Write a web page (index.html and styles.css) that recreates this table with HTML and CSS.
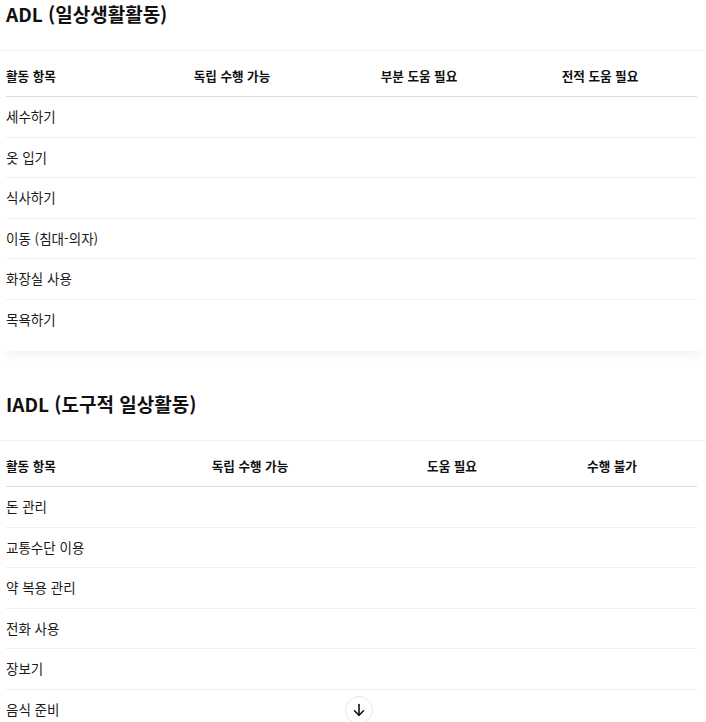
FILE: index.html
```html
<!DOCTYPE html>
<html lang="ko">
<head>
<meta charset="utf-8">
<title>ADL / IADL</title>
<link rel="stylesheet" href="styles.css">
</head>
<body>
<main class="page">
  <section class="card card-first">
    <h2 class="card-title">ADL (일상생활활동)</h2>
    <table class="grid">
      <colgroup>
        <col class="adl-c1"><col class="adl-c2"><col class="adl-c3"><col class="adl-c4">
      </colgroup>
      <thead>
        <tr><th class="left">활동 항목</th><th>독립 수행 가능</th><th>부분 도움 필요</th><th>전적 도움 필요</th></tr>
      </thead>
      <tbody>
        <tr><td class="left">세수하기</td><td></td><td></td><td></td></tr>
        <tr><td class="left">옷 입기</td><td></td><td></td><td></td></tr>
        <tr><td class="left">식사하기</td><td></td><td></td><td></td></tr>
        <tr><td class="left">이동 (침대-의자)</td><td></td><td></td><td></td></tr>
        <tr><td class="left">화장실 사용</td><td></td><td></td><td></td></tr>
        <tr><td class="left">목욕하기</td><td></td><td></td><td></td></tr>
      </tbody>
    </table>
  </section>

  <section class="card">
    <h2 class="card-title">IADL (도구적 일상활동)</h2>
    <table class="grid">
      <colgroup>
        <col class="iadl-c1"><col class="iadl-c2"><col class="iadl-c3"><col class="iadl-c4">
      </colgroup>
      <thead>
        <tr><th class="left">활동 항목</th><th>독립 수행 가능</th><th>도움 필요</th><th>수행 불가</th></tr>
      </thead>
      <tbody>
        <tr><td class="left">돈 관리</td><td></td><td></td><td></td></tr>
        <tr><td class="left">교통수단 이용</td><td></td><td></td><td></td></tr>
        <tr><td class="left">약 복용 관리</td><td></td><td></td><td></td></tr>
        <tr><td class="left">전화 사용</td><td></td><td></td><td></td></tr>
        <tr><td class="left">장보기</td><td></td><td></td><td></td></tr>
        <tr><td class="left">음식 준비</td><td></td><td></td><td></td></tr>
      </tbody>
    </table>
  </section>
</main>

<button class="scroll-down" type="button" aria-label="아래로 스크롤">
  <svg width="14" height="14" viewBox="0 0 14 14" fill="none" stroke="#111" stroke-width="1.6" stroke-linecap="round" stroke-linejoin="round">
    <path d="M7 1.5v10.5"/>
    <path d="M2.5 7.8L7 12.2l4.5-4.4"/>
  </svg>
</button>
</body>
</html>
```

FILE: styles.css
```css
* { box-sizing: border-box; }

html, body {
  margin: 0;
  padding: 0;
  background: #ffffff;
}

body {
  font-family: "Noto Sans CJK KR", "Noto Sans", sans-serif;
  color: #1a1a1a;
  overflow: hidden;
}

.page {
  display: flex;
  flex-direction: column;
  gap: 21px;
}

.card {
  background: #ffffff;
  padding: 18px 0 12px;
  box-shadow: 0 8px 12px -6px rgba(0, 0, 0, 0.07);
}

.card-first {
  padding-top: 0;
}

.card-title {
  margin: 0;
  padding: 0 6px 22px;
  font-size: 19px;
  line-height: 28px;
  font-weight: 700;
  color: #111;
  border-bottom: 1px solid #f0f0f0;
}

.grid {
  margin-left: 6px;
  width: 691px;
  border-collapse: collapse;
  table-layout: fixed;
  font-size: 13.5px;
}

.adl-c1 { width: 123px; }
.adl-c2 { width: 206px; }
.adl-c3 { width: 168px; }
.adl-c4 { width: 194px; }

.iadl-c1 { width: 117px; }
.iadl-c2 { width: 254px; }
.iadl-c3 { width: 150px; }
.iadl-c4 { width: 170px; }

.grid th {
  padding: 15px 0 10px;
  line-height: 20px;
  font-size: 12.6px;
  font-weight: 700;
  color: #111;
  text-align: center;
  border-bottom: 1px solid #dcdcdc;
  white-space: nowrap;
}

.grid td {
  padding: 10px 0;
  line-height: 19.5px;
  text-align: center;
  border-bottom: 1px solid #efefef;
  white-space: nowrap;
}

.grid tbody tr:last-child td {
  border-bottom: none;
}

.grid .left {
  text-align: left;
}

.scroll-down {
  position: fixed;
  left: 345px;
  top: 696px;
  width: 28px;
  height: 28px;
  padding: 0;
  border: 1px solid #e6e6e6;
  border-radius: 50%;
  background: #ffffff;
  display: flex;
  align-items: center;
  justify-content: center;
  cursor: pointer;
}
```
